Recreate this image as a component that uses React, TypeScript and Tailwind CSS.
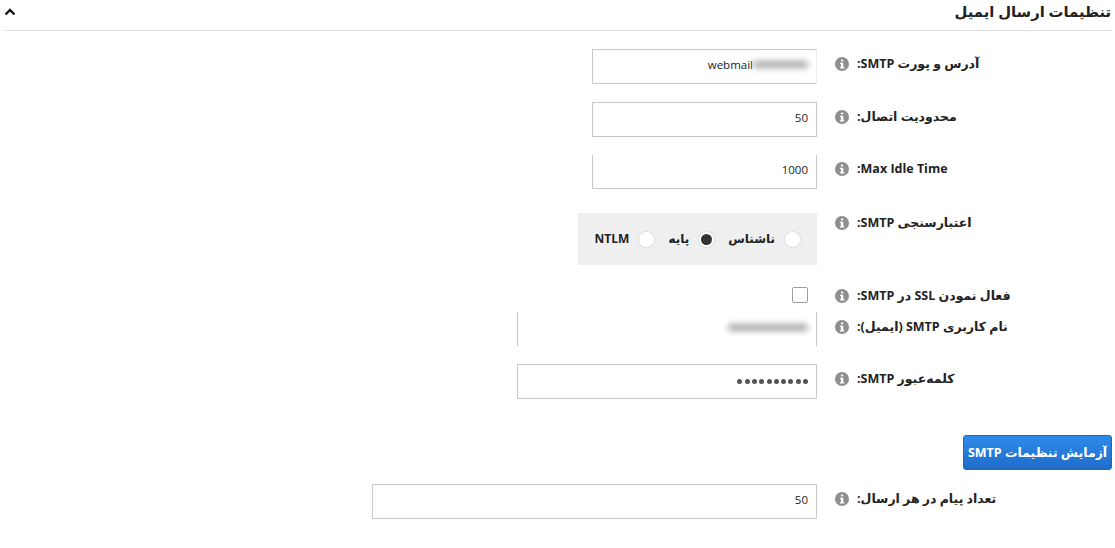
const font = "font-['Open_Sans','DejaVu_Sans',sans-serif]";

const InfoIcon = () => (
  <svg viewBox="0 0 14 14" className="h-[14px] w-[14px] shrink-0">
    <circle cx="7" cy="7" r="7" fill="#8f8f8f" />
    <rect x="5.9" y="2.4" width="2.4" height="2.2" rx="1" fill="#fff" />
    <path d="M5 5.7h3.3v4.5h1v1.3H4.9v-1.3h1V7H5z" fill="#fff" />
  </svg>
);

const Radio = ({ checked = false }: { checked?: boolean }) => (
  <span className="flex h-[17px] w-[17px] items-center justify-center rounded-full border border-[#dcdcdc] bg-white">
    {checked && <span className="h-[11px] w-[11px] rounded-full bg-[#333]" />}
  </span>
);

const Field = ({
  label,
  children,
  rowClass,
  labelClass = "pt-[6px]",
}: {
  label: string;
  children: React.ReactNode;
  rowClass: string;
  labelClass?: string;
}) => (
  <div className={`flex ${rowClass}`}>
    <div className={`flex w-[277px] shrink-0 flex-row-reverse items-start justify-start gap-[8px] ${labelClass}`}>
      <span className="mt-[2px]"><InfoIcon /></span>
      <span className="mt-[1px] whitespace-nowrap text-[12.5px] leading-[16px] font-bold text-[#222]">{label}</span>
    </div>
    <div className="mr-[18px]">{children}</div>
  </div>
);

const inputClass =
  "flex items-center justify-start border border-[#c9c9c9] bg-white px-[8px] text-[11.5px] text-[#222] font-['Open_Sans',sans-serif]";

const Blur = ({ w, className = "" }: { w: number; className?: string }) => (
  <span
    className={`inline-block h-[7px] rounded-sm bg-[#a8a8a8] blur-[3px] ${className}`}
    style={{ width: w }}
  />
);

export default function App() {
  return (
    <div dir="rtl" className={`h-[548px] w-[1115px] overflow-hidden bg-white pr-[3px] pl-[3px] ${font}`}>
      <div className="flex h-[31px] items-start justify-between border-b border-[#e2e2e2]">
        <h3 className="pt-[1px] pr-[1px] text-[14.8px] leading-[20px] font-bold text-[#222]">تنظیمات ارسال ایمیل</h3>
        <svg viewBox="0 0 12 8" className="mt-[8px] ml-[1px] h-[8px] w-[12px]">
          <path d="M1.5 6.5 6 2l4.5 4.5" fill="none" stroke="#111" strokeWidth="2.4" />
        </svg>
      </div>

      <Field label="آدرس و پورت SMTP:" rowClass="mt-[18px]">
        <div className={`${inputClass} h-[35px] w-[225px] border-r-[#eeeeee] pb-[4px]`} dir="ltr">
          <span className="ml-auto flex items-center">
            <span>webmail</span>
            <Blur w={55} />
          </span>
        </div>
      </Field>

      <Field label="محدودیت اتصال:" rowClass="mt-[18px]">
        <div className={`${inputClass} h-[35px] w-[225px] pb-[4px]`}>50</div>
      </Field>

      <Field label="Max Idle Time:" rowClass="mt-[18px]" labelClass="pt-[5px]">
        <div className={`${inputClass} h-[34px] w-[225px] border-t-0 pb-[3px]`}>1000</div>
      </Field>

      <Field label="اعتبارسنجی SMTP:" rowClass="mt-[24px]" labelClass="pt-[1px]">
        <div className="flex h-[52px] w-[239px] items-center gap-[9px] bg-[#efefef] pr-[16px] text-[12px] font-bold text-[#222]">
          <Radio />
          <span>ناشناس</span>
          <span className="mr-[4px]"><Radio checked /></span>
          <span>پایه</span>
          <span className="mr-[4px]"><Radio /></span>
          <span>NTLM</span>
        </div>
      </Field>

      <Field label="فعال نمودن SSL در SMTP:" rowClass="mt-[22px]" labelClass="pt-0">
        <div className="mr-[9px] h-[16px] w-[16px] rounded-[2px] border border-[#9d9d9d] bg-white" />
      </Field>

      <Field label="نام کاربری SMTP (ایمیل):" rowClass="mt-[8px]">
        <div className="flex h-[34px] w-[300px] items-center border-x border-[#c9c9c9] bg-white px-[8px] pb-[3px]">
          <Blur w={80} />
        </div>
      </Field>

      <Field label="کلمه‌عبور SMTP:" rowClass="mt-[18px]">
        <div className={`${inputClass} h-[35px] w-[300px] gap-[2.3px]`}>
          {Array.from({ length: 10 }).map((_, i) => (
            <span key={i} className="h-[5px] w-[5px] rounded-full bg-[#555] blur-[0.6px]" />
          ))}
        </div>
      </Field>

      <div className="mt-[36px] flex">
        <button className="h-[35px] w-[149px] rounded-[3px] border border-[#1c66bd] bg-gradient-to-b from-[#2f8be8] to-[#1f6cc9] pt-[2px] text-[12.5px] font-bold text-white">
          آزمایش تنظیمات SMTP
        </button>
      </div>

      <Field label="تعداد پیام در هر ارسال:" rowClass="mt-[14px]">
        <div className={`${inputClass} h-[35px] w-[445px] pb-[4px]`}>50</div>
      </Field>
    </div>
  );
}
